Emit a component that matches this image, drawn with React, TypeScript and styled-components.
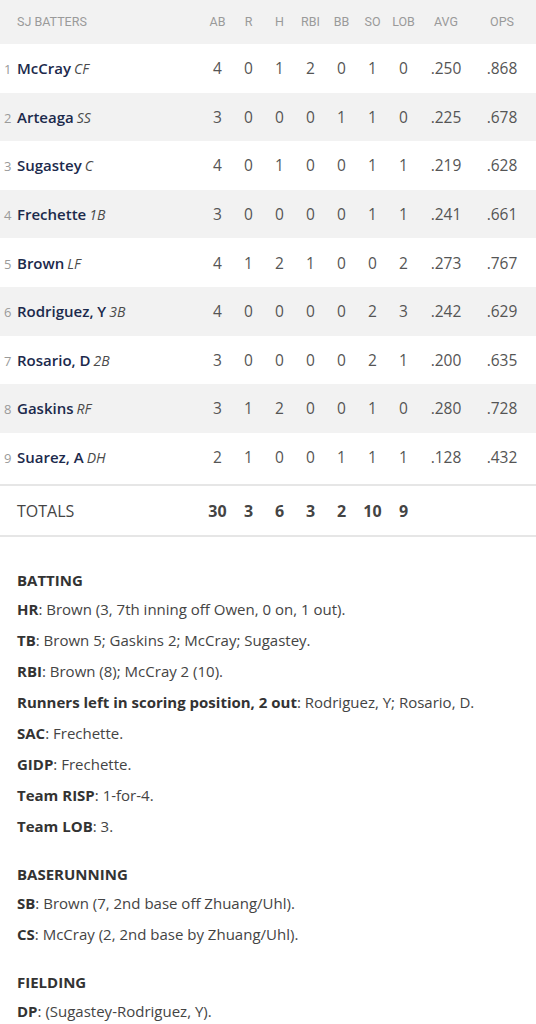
import React from "react";
import styled, { createGlobalStyle } from "styled-components";

const GlobalStyle = createGlobalStyle`
  body {
    margin: 0;
    background: #ffffff;
    font-family: "Open Sans", "Liberation Sans", sans-serif;
    color: #444;
  }
`;

type Batter = {
  order: number;
  name: string;
  pos: string;
  stats: string[];
};

const batters: Batter[] = [
  { order: 1, name: "McCray", pos: "CF", stats: ["4", "0", "1", "2", "0", "1", "0", ".250", ".868"] },
  { order: 2, name: "Arteaga", pos: "SS", stats: ["3", "0", "0", "0", "1", "1", "0", ".225", ".678"] },
  { order: 3, name: "Sugastey", pos: "C", stats: ["4", "0", "1", "0", "0", "1", "1", ".219", ".628"] },
  { order: 4, name: "Frechette", pos: "1B", stats: ["3", "0", "0", "0", "0", "1", "1", ".241", ".661"] },
  { order: 5, name: "Brown", pos: "LF", stats: ["4", "1", "2", "1", "0", "0", "2", ".273", ".767"] },
  { order: 6, name: "Rodriguez, Y", pos: "3B", stats: ["4", "0", "0", "0", "0", "2", "3", ".242", ".629"] },
  { order: 7, name: "Rosario, D", pos: "2B", stats: ["3", "0", "0", "0", "0", "2", "1", ".200", ".635"] },
  { order: 8, name: "Gaskins", pos: "RF", stats: ["3", "1", "2", "0", "0", "1", "0", ".280", ".728"] },
  { order: 9, name: "Suarez, A", pos: "DH", stats: ["2", "1", "0", "0", "1", "1", "1", ".128", ".432"] },
];

const columns = ["AB", "R", "H", "RBI", "BB", "SO", "LOB", "AVG", "OPS"];
const totals = ["30", "3", "6", "3", "2", "10", "9", "", ""];

type Note = { label: string; text: string };
type Section = { title: string; notes: Note[] };

const sections: Section[] = [
  {
    title: "BATTING",
    notes: [
      { label: "HR", text: "Brown (3, 7th inning off Owen, 0 on, 1 out)." },
      { label: "TB", text: "Brown 5; Gaskins 2; McCray; Sugastey." },
      { label: "RBI", text: "Brown (8); McCray 2 (10)." },
      { label: "Runners left in scoring position, 2 out", text: "Rodriguez, Y; Rosario, D." },
      { label: "SAC", text: "Frechette." },
      { label: "GIDP", text: "Frechette." },
      { label: "Team RISP", text: "1-for-4." },
      { label: "Team LOB", text: "3." },
    ],
  },
  {
    title: "BASERUNNING",
    notes: [
      { label: "SB", text: "Brown (7, 2nd base off Zhuang/Uhl)." },
      { label: "CS", text: "McCray (2, 2nd base by Zhuang/Uhl)." },
    ],
  },
  {
    title: "FIELDING",
    notes: [{ label: "DP", text: "(Sugastey-Rodriguez, Y)." }],
  },
];

const Page = styled.div`
  width: 536px;
`;

const Row = styled.div<{ $height: number; $shade?: boolean }>`
  display: grid;
  grid-template-columns: 1fr repeat(7, 31px) 54px 58px;
  padding-right: 5px;
  height: ${(p) => p.$height}px;
  align-items: center;
  background: ${(p) => (p.$shade ? "#f2f2f2" : "#ffffff")};
`;

const HeadCell = styled.div<{ $left?: boolean }>`
  font-family: Roboto, "Liberation Sans", sans-serif;
  font-size: 12.5px;
  color: #9a9a9a;
  text-align: ${(p) => (p.$left ? "left" : "center")};
  padding-left: ${(p) => (p.$left ? "17px" : "0")};
  padding-bottom: 2px;
`;

const NameCell = styled.div`
  display: flex;
  align-items: baseline;
  padding-left: 4px;
  white-space: nowrap;
`;

const Order = styled.span`
  font-size: 13px;
  color: #9a9a9a;
  width: 13px;
`;

const Name = styled.span`
  font-size: 15px;
  font-weight: 600;
  color: #1c2a4c;
`;

const Pos = styled.span`
  font-size: 14px;
  font-style: italic;
  color: #4a4a4a;
  margin-left: 3px;
`;

const StatCell = styled.div`
  font-size: 15.5px;
  color: #555;
  text-align: center;
`;

const TotalsRow = styled(Row)`
  border-top: 2px solid #e6e6e6;
  border-bottom: 2px solid #e6e6e6;
  margin-top: 3px;
  box-sizing: content-box;
`;

const TotalsLabel = styled.div`
  font-size: 16px;
  color: #444;
  padding-left: 17px;
`;

const TotalCell = styled.div`
  font-size: 16px;
  font-weight: 700;
  color: #444;
  text-align: center;
`;

const Notes = styled.div`
  padding: 29px 17px 0;
  display: flex;
  flex-direction: column;
  gap: 18px;
`;

const SectionBlock = styled.div`
  display: flex;
  flex-direction: column;
`;

const SectionTitle = styled.div`
  font-size: 15px;
  font-weight: 700;
  color: #333;
  line-height: 28px;
`;

const NoteLine = styled.div`
  font-size: 15px;
  color: #444;
  line-height: 31px;
  white-space: nowrap;
`;

const NoteLabel = styled.span`
  font-weight: 700;
  color: #333;
`;

export default function App() {
  return (
    <Page>
      <GlobalStyle />
      <Row $height={44} $shade>
        <HeadCell $left>SJ BATTERS</HeadCell>
        {columns.map((c) => (
          <HeadCell key={c}>{c}</HeadCell>
        ))}
      </Row>
      {batters.map((b, i) => (
        <Row key={b.order} $height={48.6} $shade={i % 2 === 1}>
          <NameCell>
            <Order>{b.order}</Order>
            <Name>{b.name}</Name>
            <Pos>{b.pos}</Pos>
          </NameCell>
          {b.stats.map((s, j) => (
            <StatCell key={j}>{s}</StatCell>
          ))}
        </Row>
      ))}
      <TotalsRow $height={49}>
        <TotalsLabel>TOTALS</TotalsLabel>
        {totals.map((t, j) => (
          <TotalCell key={j}>{t}</TotalCell>
        ))}
      </TotalsRow>
      <Notes>
        {sections.map((s) => (
          <SectionBlock key={s.title}>
            <SectionTitle>{s.title}</SectionTitle>
            {s.notes.map((n) => (
              <NoteLine key={n.label}>
                <NoteLabel>{n.label}</NoteLabel>: {n.text}
              </NoteLine>
            ))}
          </SectionBlock>
        ))}
      </Notes>
    </Page>
  );
}
